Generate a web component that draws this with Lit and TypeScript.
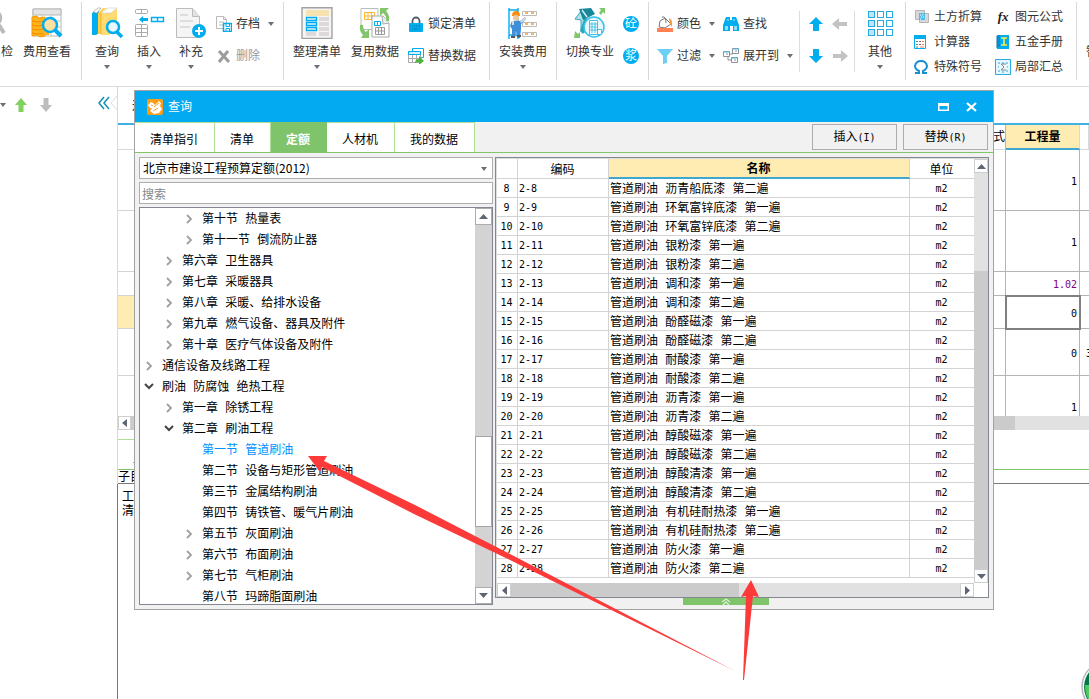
import { LitElement, html, svg, css } from "lit";
import { customElement, property, state } from "lit/decorators.js";
import { classMap } from "lit/directives/class-map.js";

const BLUE = "#00adef";

const icons: Record<string, any> = {
  check: svg`<circle cx="8" cy="11" r="8" fill="none" stroke="#bbb" stroke-width="2.5"/><path d="M14 18l5 8" stroke="#bbb" stroke-width="4"/>`,
  fee: svg`<path d="M2 2h28v27H2z" fill="#fff" stroke="#b8b8b8"/><path d="M2 2h28v6H2z" fill="#e4e4e4" stroke="#b8b8b8"/><path d="M2 14h28M2 20h28M11 8v21M20 8v21" stroke="#c4c4c4"/><path d="M1 10l5-1 2 2 6-1v19l-5 1-3-2-5 1z" fill="#ffb21c" stroke="#f59b00"/><path d="M1 14l5 1 8-1M1 18l5 1 8-1M1 22l5 1 8-1M1 26l5 1 8-1" fill="none" stroke="#f08f00"/><path d="M12 16h6v12h-6z" fill="#ffb21c"/><circle cx="19" cy="18" r="7" fill="#ffe0a0" stroke="${BLUE}" stroke-width="2.5"/><path d="M24 23l6 6" stroke="${BLUE}" stroke-width="4"/>`,
  query: svg`<path d="M1 6l7-5v25l-3 2H1z" fill="${BLUE}"/><path d="M2 5l5-4h3L6 6z" fill="#fff" stroke="#999" stroke-width=".6"/><path d="M7 6l5-5h3l-5 5v21H7z" fill="#ffcf4a"/><path d="M10 6l6-5 10 0v21l-8 6h-8z" fill="#ffdb72"/><path d="M10 6h10l6-5h-9z" fill="#fff" stroke="#ccc" stroke-width=".6"/><path d="M10 6v21" stroke="#efb32c"/><circle cx="22" cy="20" r="6" fill="#e7f7fd" stroke="${BLUE}" stroke-width="2.5"/><path d="M26 25l5 5" stroke="${BLUE}" stroke-width="3.5"/>`,
  insert: svg`<g fill="#fff" stroke="#aaa"><rect x="2.500" y="2.500" width="12" height="4" rx="1"/><rect x="2.500" y="17.500" width="12" height="12" rx="1"/><path d="M8.500 2.500v4M8.500 17.500v12M2.500 21.500h12M2.500 25.500h12"/></g><path d="M6 12.500l4-3.500v2h5v3h-5v2z" fill="${BLUE}"/><path d="M18.500 10.500h12v4h-12zM24.500 10v5" fill="#fff" stroke="${BLUE}" stroke-width="1.400"/>`,
  supplement: svg`<path d="M1.500 1.500h16l7 8v21h-23z" fill="#f5f5f5" stroke="#bbb"/><path d="M17.500 1.500v8h7" fill="#e2e2e2" stroke="#bbb"/><path d="M5 8h8M5 14h13M5 20h10" stroke="#ddd" stroke-width="2"/><circle cx="24" cy="24" r="7" fill="${BLUE}"/><path d="M24 20v8M20 24h8" stroke="#fff" stroke-width="2"/>`,
  archive: svg`<path d="M.5.5h7l3 3v9h-10z" fill="#fff" stroke="#bbb"/><path d="M7.500.5v3h3M3 6h5M3 9h4" fill="none" stroke="#bbb"/><path d="M7.500 7.500h8v8h-8z" fill="#fff" stroke="${BLUE}" stroke-width="1.500"/><path d="M10 8v2.500h3.500V8M10 15v-2.500h3.500V15" fill="none" stroke="${BLUE}"/>`,
  remove: svg`<path d="M3 3l10 11M12 3L3 14" stroke="#9c9c9c" stroke-width="3"/>`,
  arrange: svg`<path d="M1 .8h30v30.700H1z" fill="#f4f4f4" stroke="#a2a2a2" stroke-width="1.400"/><path d="M5 3h23v6H5z" fill="#f6e3b0"/><path d="M18 10h10v4H18zM18 15h10v4H18zM18 20h10v4H18zM5 25h10v4H5zM18 25h10v4H18z" fill="#dcd8dc"/><g fill="#d9f2fc" stroke="${BLUE}" stroke-width="1.400"><path d="M5.500 10.500h10v3h-10zM5.500 15.500h10v3h-10zM5.500 20.500h10v3h-10z"/></g>`,
  reuse: svg`<path d="M2 1.500h17v21H2z" fill="#fff" stroke="#bbb"/><path d="M5.500 5.500h10v7h-10zM9 5v8M12.500 5v8M5.500 9h10" fill="none" stroke="#ffb52e"/><path d="M13 9h11l6 7v14H13z" fill="#fff" stroke="#aaa"/><path d="M23 9l1 8 6-1" fill="#eee" stroke="#aaa"/><path d="M15.500 14.500h6v4h-6zM18.500 14v5" fill="#fff" stroke="${BLUE}"/><path d="M16.500 20.500h9v7h-9zM19.500 20v7M22.500 20v7M16.500 24h9" fill="none" stroke="#999"/><path d="M21 1h9l-3 3q4 4 3 10h-3q1-5-3-8l-3 3z" fill="#82c66b"/><path d="M1 18h3q0 5 3 7l3-3v9H2l2-3q-4-4-3-10z" fill="#82c66b"/>`,
  lock: svg`<path d="M4.500 8V5a3.500 3.500 0 0 1 7 0v3" fill="none" stroke="#555c6b" stroke-width="1.800"/><rect x="1" y="7" width="14" height="9" rx="1" fill="${BLUE}"/><path d="M4 10h1M6 10h1M8 10h1M10 10h2M4 13h1M6 13h4M11 13h1" stroke="#0878a8"/>`,
  replace: svg`<path d="M4.500.5h11v9h-11z" fill="#fff" stroke="${BLUE}"/><path d="M.5 3.500h12v11H.5z" fill="#fff" stroke="#aaa"/><path d="M.5 3.500h12v3H.5z" fill="#d5f2fc" stroke="${BLUE}"/><path d="M4.500 7v7M8.500 7v7M1 10.500h11" stroke="#aaa"/><path d="M7 15q0-4 4-4V8l5 5-5 4v-3q-3 0-4 1z" fill="#4cb53b"/>`,
  install: svg`<path d="M2 1v31M11 1v31M2 3h9M2 28h9" stroke="${BLUE}" stroke-width="1.400" fill="none"/><g fill="#fff" stroke="#bbb"><path d="M15.500 4.500h14v4h-14zM15.500 15.500h14v4h-14zM15.500 25.500h14v4h-14z"/></g><path d="M18 6h3M24 6h3M18 17h3M24 17h3M18 27h3M24 27h3" stroke="#f79a2c" stroke-width="1.400"/><path d="M5 9q0-5 4-5t4 5z" fill="#ff8d0a"/><circle cx="9" cy="11" r="3" fill="#f3c6a2"/><path d="M5 14h8l5-4 1 2-5 5v5l-1 9h-3l-1-7-1 7H5V22l-2-3z" fill="#3d8fda"/><path d="M5 14h2v4H5zM13 14l5-4 1 2-5 4z" fill="#d7dbe0"/><path d="M4 29h4v2H4zM10 28h4v2h-4z" fill="#555"/>`,
  switchPro: svg`<path d="M1 12L8 3l3 1 2 9-3 13-3-2 0-11z" fill="#b4e1e8" stroke="#0a94aa" stroke-width=".8"/><path d="M5 2L17 1l4 6-12 6z" fill="#17879a"/><path d="M8 3l5 7" stroke="#d5f2f6" stroke-width="1.400"/><path d="M10 12l-4 12 3 3 6-15z" fill="#29a7b7"/><circle cx="20" cy="20" r="10" fill="#e6f8fd" stroke="#33c2ec" stroke-width="1.500"/><path d="M15.500 13.500h8v14h-8zM23.500 22.500h4v5h-4z" fill="#fff" stroke="#49bfe2"/><path d="M18 15v11M21 15v11M16 17h7M16 20h7M16 23h7" stroke="#49bfe2"/><path d="M25 1h6v6l-2-2-2 3-2-2 2-3zM1 24l3 3 2-2v6H0z" fill="#82c66b"/>`,
  disc: svg`<circle cx="8" cy="8" r="8" fill="${BLUE}"/>`,
  color: svg`<path d="M3 5l5-3 6 6-6 4-6-1z" fill="#fff" stroke="#777"/><path d="M5 1q4-1 4 6" fill="none" stroke="#777"/><path d="M12 2q4 1 3 9l-2-3z" fill="#f79a3c"/><path d="M0 12h16v4H0z" fill="#ff8154"/>`,
  find: svg`<path d="M3 1h4v3h2V1h4l3 8v6h-6v-5H7v5H0V9z" fill="${BLUE}"/><path d="M2 10h3v4H2zM11 10h3v4h-3z" fill="#8edcf6"/><path d="M4 4h2M10 4h2" stroke="#bdeafa"/>`,
  filter: svg`<path d="M0 1h16l-6 7v7l-4 1V8z" fill="#6dcff6"/>`,
  expand: svg`<g fill="#fff" stroke="#8c9199"><path d="M.5 3.500h6v5h-6zM9.500.5h6v5h-6zM8.500 9.500h6v5h-6z"/></g><path d="M1 4h6M10 1h6M9 10h6" stroke="#49bfe2"/><path d="M7 6h3M5 9v3h3M12 3h2M11 12h2M3 6h2" fill="none" stroke="#8c9199"/>`,
  up: svg`<path d="M8 1l7 7h-4v7H5V8H1z" fill="${BLUE}"/>`,
  down: svg`<path d="M8 15l7-7h-4V1H5v7H1z" fill="${BLUE}"/>`,
  left: svg`<path d="M0 8l7-6v4h8v4H7v4z" fill="#c3c3c3"/>`,
  right: svg`<path d="M16 8L9 2v4H1v4h8v4z" fill="#c3c3c3"/>`,
  other: svg`<g stroke="#28a9e0">${[5, 14, 23].map((y) => [4, 13, 22].map((x) => svg`<rect x=${x + 0.5} y=${y - 0.5} width="6" height="6" fill=${x === 4 ? "#bfe3fa" : "#fff"}/>`))}</g>`,
  earth: svg`<path d="M1.500 1.500h9v9h-9zM5.500 4.500h9v9h-9z" fill="#d9d9d9" stroke="#b5b5b5"/><path d="M5 4h6v7H5z" fill="#50bfe8"/><path d="M6 6h1M8 6h1M7 8h1M9 8h1M6 10h1" stroke="#fff"/>`,
  calc: svg`<path d="M.5 1.500h11v13h-11z" fill="#fff" stroke="${BLUE}"/><path d="M0 1h12v4H0z" fill="${BLUE}"/><path d="M2 7.500h2M5 7.500h2M2 10.500h2M5 10.500h2M2 13h2" stroke="#777"/><path d="M8 7.500h2M8 10.500h2M6 13h4" stroke="#f27c49"/>`,
  omega: svg`<path d="M1 14h4v-2Q1 10 1 7q1-5 6-5t6 5q0 3-4 5v2h4" fill="none" stroke="#168fd2" stroke-width="2"/>`,
  book: svg`<path d="M2 1h12v14H2z" fill="${BLUE}"/><path d="M2 2v12M4 1v12" stroke="#0a6fa8"/><path d="M6 4h6M9 4v7M6 11h6" stroke="#ffe94a" stroke-width="1.600"/>`,
  sum: svg`<path d="M.5.5h15v15H.5z" fill="#e5f6fd" stroke="#28a9e0"/><path d="M3 4h2M7 4h2M11 4h2M3 12h2M7 13h2M11 12h2M3 8h1M12 8h1" stroke="#28a9e0"/><path d="M11 5H6l3 3-3 3h5" fill="none" stroke="#888"/>`,
};

const glyph = (name: string, size: number) =>
  html`<svg width=${size} height=${size} viewBox="0 0 ${size} ${size}" aria-hidden="true">${icons[name]}</svg>`;

const font = css`"Liberation Sans", "Noto Sans CJK SC", sans-serif`;
const gridFont = css`"Liberation Mono", "Noto Sans CJK SC", monospace`;

const reset = css`
  * { box-sizing: border-box; }
  button {
    font: inherit; color: inherit; background: none; border: 0; padding: 0; margin: 0;
    text-align: center; white-space: nowrap; cursor: pointer;
  }
  svg { display: block; flex: none; }
  .caret { width: 0; height: 0; border: 3px solid transparent; border-top: 4px solid #6b6f79; border-bottom: 0; flex: none; }
`;

@customElement("app-ribbon")
class AppRibbon extends LitElement {
  static styles = [reset, css`
    :host { display: flex; height: 87px; background: #fff; border-bottom: 1px solid #ddd; overflow: hidden; color: #333; font: 12px/18px ${font}; }
    .group { display: flex; flex: none; height: 78px; margin-top: 2px; padding-right: 9px; border-right: 1px solid #d9d9d9; }
    .first { margin-left: -20px; }
    .pad4 { padding-left: 4px; }
    .pad8 { padding-left: 8px; }
    .flush { padding-right: 0; }
    .wide-end { padding-right: 13px; }
    .big { display: flex; flex-direction: column; align-items: center; padding-top: 5px; }
    .big span { margin: 4px 0; }
    .w42 { width: 42px; } .w50 { width: 50px; } .w58 { width: 58px; } .w66 { width: 66px; }
    .col { display: flex; flex-direction: column; gap: 14px; padding-top: 13px; }
    .col.tight { gap: 7px; padding-top: 6px; }
    .small { display: flex; align-items: center; gap: 4px; height: 18px; }
    .small .caret { margin-left: 4px; }
    .disabled { color: #999; }
    .inset { margin-left: 4px; }
    .next { margin-left: 8px; }
    .last-col { margin-left: 13px; margin-right: 4px; }
    .short { align-self: center; height: 61px; width: 1px; background: #ddd; margin-left: 6px; }
    .round { position: relative; width: 16px; color: #fff; }
    .round b { position: absolute; inset: 0; font: 12px/18px ${font}; }
    .fx { width: 16px; font: italic bold 13px/16px "Liberation Serif", serif; color: #222; }
  `];

  big(icon: string, label: string, width: string, caret = false) {
    return html`<button class="big ${width}">${glyph(icon, 32)}<span>${label}</span>${caret ? html`<i class="caret"></i>` : ""}</button>`;
  }
  small(icon: string, label: string, caret = false, extra = "") {
    return html`<button class="small ${extra}">${icon === "fx" ? html`<i class="fx">fx</i>` : glyph(icon, 16)}${label}${caret ? html`<i class="caret"></i>` : ""}</button>`;
  }
  arrow(icon: string, label: string) {
    return html`<button class="small" aria-label=${label}>${glyph(icon, 16)}</button>`;
  }
  round(label: string) {
    return html`<button class="small round">${glyph("disc", 16)}<b>${label}</b></button>`;
  }

  render() {
    return html`
      <div class="group first">${this.big("check", "自检", "w42")}${this.big("fee", "费用查看", "w50")}</div>
      <div class="group pad4">
        ${this.big("query", "查询", "w42", true)}${this.big("insert", "插入", "w42", true)}${this.big("supplement", "补充", "w42", true)}
        <div class="col inset">${this.small("archive", "存档", true)}${this.small("remove", "删除", false, "disabled")}</div>
      </div>
      <div class="group pad4 wide-end">
        ${this.big("arrange", "整理清单", "w58", true)}${this.big("reuse", "复用数据", "w58")}
        <div class="col inset">${this.small("lock", "锁定清单")}${this.small("replace", "替换数据")}</div>
      </div>
      <div class="group flush">${this.big("install", "安装费用", "w66", true)}</div>
      <div class="group">
        ${this.big("switchPro", "切换专业", "w66")}
        <div class="col">${this.round("砼")}${this.round("浆")}</div>
      </div>
      <div class="group pad8 flush">
        <div class="col">${this.small("color", "颜色", true)}${this.small("filter", "过滤", true)}</div>
        <div class="col next">${this.small("find", "查找")}${this.small("expand", "展开到", true)}</div>
        <div class="short"></div>
        <div class="col next">${this.arrow("up", "上移")}${this.arrow("down", "下移")}</div>
        <div class="col next">${this.arrow("left", "升级")}${this.arrow("right", "降级")}</div>
        <div class="short"></div>
        ${this.big("other", "其他", "w50", true)}
      </div>
      <div class="group pad8">
        <div class="col tight">${this.small("earth", "土方折算")}${this.small("calc", "计算器")}${this.small("omega", "特殊符号")}</div>
        <div class="col tight last-col">${this.small("fx", "图元公式")}${this.small("book", "五金手册")}${this.small("sum", "局部汇总")}</div>
      </div>
      <div class="group pad8">${this.big("", "智能组价", "w50")}</div>
    `;
  }
}

type Node = { level: number; label: string; mark: "" | "closed" | "open" };
const n = (level: number, label: string, mark: Node["mark"] = "closed"): Node => ({ level, label, mark });
const TREE: Node[] = [
  n(2, "第十节 热量表"), n(2, "第十一节 倒流防止器"),
  n(1, "第六章 卫生器具"), n(1, "第七章 采暖器具"), n(1, "第八章 采暖、给排水设备"),
  n(1, "第九章 燃气设备、器具及附件"), n(1, "第十章 医疗气体设备及附件"),
  n(0, "通信设备及线路工程"), n(0, "刷油 防腐蚀 绝热工程", "open"),
  n(1, "第一章 除锈工程"), n(1, "第二章 刷油工程", "open"),
  n(2, "第一节 管道刷油", ""), n(2, "第二节 设备与矩形管道刷油", ""), n(2, "第三节 金属结构刷油", ""),
  n(2, "第四节 铸铁管、暖气片刷油", ""), n(2, "第五节 灰面刷油"), n(2, "第六节 布面刷油"),
  n(2, "第七节 气柜刷油"), n(2, "第八节 玛蹄脂面刷油", ""),
];

const PAINTS = ["环氧富锌底漆", "银粉漆", "调和漆", "酚醛磁漆", "耐酸漆", "沥青漆", "醇酸磁漆", "醇酸清漆", "有机硅耐热漆", "防火漆"];
const NAMES = ["沥青船底漆 第二遍", ...PAINTS.flatMap((p) => [`${p} 第一遍`, `${p} 第二遍`])];
const ROWS = NAMES.map((name, i) => ({ index: i + 8, code: `2-${i + 8}`, name: `管道刷油 ${name}` }));

@customElement("query-dialog")
class QueryDialog extends LitElement {
  @property() heading = "查询";
  @state() tab = "定额";
  @state() node = "第一节 管道刷油";

  static styles = [reset, css`
    :host { display: block; background: #f1f1f1; border: 1px solid #a3a3a3; color: #000; font: 12px/18px ${font}; }
    .title { display: flex; align-items: center; height: 31px; padding: 0 13px 0 12px; background: #03a9f1; color: #fff; }
    .title span { margin-left: 5px; flex: 1; }
    .title button { width: 16px; height: 16px; margin-left: 13px; }
    .tabs { display: flex; align-items: center; height: 31px; padding-right: 5px; border-bottom: 1px solid #82c66b; }
    .tab { height: 30px; padding: 0 16px 0 15px; background: #fff; border-right: 1px solid #b0e096; border-top: 1px solid #b0e096; line-height: 34px; }
    .tab.on { background: #7fc46a; color: #fff; font-weight: bold; border-color: #7fc46a; }
    .grow { flex: 1; }
    .action { width: 85px; height: 26px; margin-left: 6px; border: 1px solid #adadad; }
    .action span { font: 10px "DejaVu Sans Mono", monospace; }
    .body { display: grid; grid-template-columns: 354px minmax(0, 1fr); gap: 2px; padding: 4px; }
    .side { display: flex; flex-direction: column; gap: 3px; }
    .combo { position: relative; display: block; }
    .combo .caret { position: absolute; right: 6px; top: 10px; }
    select, input { display: block; width: 100%; height: 22px; margin: 0; padding: 0 3px; border: 1px solid #adadad; background: #fff; border-radius: 0; color: #000; font: 12px/20px "Noto Sans CJK SC", sans-serif; appearance: none; outline: 0; }
    input { padding: 0 2px; }
    input::placeholder { color: #888; opacity: 1; }
    .tree { display: flex; flex: 1; contain: size; overflow: hidden; background: #fff; border: 1px solid #828790; font-family: ${gridFont}; }
    .nodes { flex: 1; min-width: 0; overflow: hidden; }
    .node { display: flex; align-items: center; width: 100%; height: 21px; line-height: 17px; }
    .label { padding-top: 4px; }
    .l0 { padding-left: 1px; } .l1 { padding-left: 21px; } .l2 { padding-left: 41px; }
    .mark { display: flex; justify-content: center; width: 16px; margin-right: 5px; }
    .sel { color: #0090ff; }
    .vbar, .hbar { display: flex; background: #e1e1e1; }
    .vbar { flex-direction: column; }
    .tree .vbar { width: 17px; background: #d3d3d3; }
    .arrow { display: flex; align-items: center; justify-content: center; flex: none; width: 14px; height: 14px; background: #fff; border: 1px solid #cfcfcf; }
    .tree .arrow { width: 17px; height: 17px; border-color: #adadad; }
    .s212 { flex: 212; } .s90 { flex: 90; } .s60 { flex: 60; } .s98 { flex: 98; } .s299 { flex: 299; } .s228 { flex: 228; } .s222 { flex: 222; }
    .thumb { background: #cbcbcb; }
    .tree .thumb { background: #fff; border: 1px solid #a5a5a5; }
    .panel { display: grid; grid-template-columns: minmax(0, 1fr) 14px; background: #fff; border: 1px solid #828790; box-shadow: inset 1px 1px #dcdcdc; padding: 1px 0 0 1px; }
    .sheet { padding-bottom: 5px; }
    table { width: 100%; table-layout: fixed; border-collapse: separate; border-spacing: 0; font-family: ${gridFont}; }
    th, td { height: 19px; padding: 4px 2px 0 1px; border: solid #d3d3d3; border-width: 0 1px 1px 0; line-height: 14px; font-weight: normal; text-align: left; white-space: nowrap; overflow: hidden; }
    th { height: 20px; text-align: center; }
    th.on { background: #ffecb3; border-bottom: 2px solid #3ea6cf; font-weight: bold; }
    th:last-child, td:last-child { border-right: 0; }
    td.num { padding-top: 2px; font: 10px/16px "DejaVu Sans Mono", monospace; }
    td.mid { text-align: center; }
    .c1 { width: 21px; } .c2 { width: 91px; } .c4 { width: 64px; }
    .grip { display: flex; justify-content: center; width: 86px; height: 7px; margin-left: 38%; background: #7fc46a; }
  `];

  tri(d: string) {
    return html`<svg width="9" height="9" viewBox="0 0 9 9" aria-hidden="true"><path d=${d} fill="#5f6673"/></svg>`;
  }
  arrow(dir: "up" | "down" | "left" | "right") {
    const d = { up: "M0 7l4.500-5L9 7z", down: "M0 2l4.500 5L9 2z", left: "M7 0L2 4.500 7 9z", right: "M2 0l5 4.500L2 9z" }[dir];
    return html`<button class="arrow" aria-label=${dir}>${this.tri(d)}</button>`;
  }
  mark(kind: Node["mark"]) {
    if (kind === "closed") return html`<svg width="8" height="10" viewBox="0 0 8 10"><path d="M2 1l4 4-4 4" fill="none" stroke="#a0a0a0" stroke-width="1.800"/></svg>`;
    if (kind === "open") return html`<svg width="10" height="8" viewBox="0 0 10 8"><path d="M1 1l4 4 4-4" fill="none" stroke="#444" stroke-width="2"/></svg>`;
    return "";
  }

  render() {
    return html`
      <div class="title">
        <svg width="16" height="16" viewBox="0 0 16 16"><rect width="16" height="16" rx="2" fill="#fb9c1b"/><path d="M1 6l3-3 2 1 2 2 4-4 2 2-1 3 2 3-3 4-5 1-4-3 2-3-2 0z" fill="#fff"/><path d="M4 6l2 1M7 8l5-4M6 12l5-3" stroke="#fb9c1b"/></svg>
        <span>${this.heading}</span>
        <button aria-label="最大化"><svg width="16" height="16" viewBox="0 0 16 16"><path d="M3 4h11v8H3zM4.500 7v3.500h8V7z" fill="#fff" fill-rule="evenodd"/></svg></button>
        <button aria-label="关闭"><svg width="16" height="16" viewBox="0 0 16 16"><path d="M3 4l9 8M12 4l-9 8" stroke="#fff" stroke-width="2.200"/></svg></button>
      </div>
      <div class="tabs">
        ${["清单指引", "清单", "定额", "人材机", "我的数据"].map((t) => html`<button class=${classMap({ tab: true, on: t === this.tab })} @click=${() => (this.tab = t)}>${t}</button>`)}
        <div class="grow"></div>
        <button class="action">插入<span>(I)</span></button>
        <button class="action">替换<span>(R)</span></button>
      </div>
      <div class="body">
        <div class="side">
          <label class="combo"><select aria-label="定额库"><option>北京市建设工程预算定额(2012)</option></select><i class="caret"></i></label>
          <input type="text" placeholder="搜索" aria-label="搜索">
          <div class="tree">
            <div class="nodes">
              ${TREE.map((t) => html`<button class="node l${t.level} ${t.label === this.node ? "sel" : ""}" @click=${() => (this.node = t.label)}><span class="mark">${this.mark(t.mark)}</span><span class="label">${t.label}</span></button>`)}
            </div>
            <div class="vbar">${this.arrow("up")}<div class="s212"></div><div class="thumb s90"></div><div class="s60"></div>${this.arrow("down")}</div>
          </div>
        </div>
        <div>
          <div class="panel">
            <div class="sheet">
              <table>
                <thead><tr><th class="c1"></th><th class="c2">编码</th><th class="on">名称</th><th class="c4">单位</th></tr></thead>
                <tbody>${ROWS.map((r) => html`<tr><td class="num mid">${r.index}</td><td class="num">${r.code}</td><td>${r.name}</td><td class="num mid">m2</td></tr>`)}</tbody>
              </table>
            </div>
            <div class="vbar">${this.arrow("up")}<div class="s98"></div><div class="thumb s299"></div>${this.arrow("down")}</div>
            <div class="hbar">${this.arrow("left")}<div class="thumb s228"></div><div class="s222"></div>${this.arrow("right")}</div>
          </div>
          <div class="grip"><svg width="10" height="7" viewBox="0 0 10 7"><path d="M1 4l4-3 4 3M2 7l3-3 3 3" fill="none" stroke="#d9f0d0" stroke-width="1.400"/></svg></div>
        </div>
      </div>
    `;
  }
}

const QUANTITIES = [
  { h: "h61", value: "1" },
  { h: "h61", value: "1" },
  { h: "h24", value: "1.02", tone: "purple" },
  { h: "h33", value: "0", tone: "focus" },
  { h: "h47", value: "0", next: "3" },
  { h: "h61", value: "1" },
];

@customElement("app-root")
class AppRoot extends LitElement {
  static styles = [reset, css`
    :host { display: flex; flex-direction: column; position: relative; min-height: 100vh; overflow: hidden; background: #fff; color: #000; font: 12px/18px ${font}; }
    .work { display: flex; flex: 1; }
    .aside { width: 117px; flex: none; }
    .tools { display: flex; align-items: center; height: 36px; }
    .tools button { margin-left: 9px; }
    .tools .fold { margin-left: auto; margin-bottom: 5px; }
    .notch { margin-bottom: 4px; }
    .main { display: flex; flex: 1; flex-direction: column; min-width: 0; border-left: 1px solid #d8d8d8; }
    .strip { height: 38px; padding: 10px 14px 0; border-bottom: 2px solid #41b1e1; }
    .sheet { height: 291px; overflow: hidden; }
    table { width: 100%; table-layout: fixed; border-collapse: separate; border-spacing: 0; }
    th, td { padding: 3px 2px 0; border: solid #b4b4b4; border-width: 0 1px 1px 0; text-align: right; font: 10px/16px "DejaVu Sans Mono", monospace; }
    th { height: 25px; padding-top: 0; border-color: #d8d8d8; font: 12px/20px ${font}; }
    th.expr { padding: 0; border-right-color: #b4b4b4; }
    th.on { padding: 0; text-align: center; background: #ffecb3; border-bottom: 2px solid #3ea6cf; font-weight: bold; }
    td:first-child { border-color: #d3d3d3; }
    .h61 { height: 61px; } .h24 { height: 24px; } .h33 { height: 33px; } .h47 { height: 47px; }
    .mark td:first-child { background: #ffecb3; }
    .purple .qty { color: #800080; }
    .focus .qty { outline: 2px solid #808080; outline-offset: -1px; }
    .expr { width: 90px; } .qty { width: 74px; } .more { width: 9px; }
    td.more { padding: 3px 0 0 6px; text-align: left; border-right: 0; overflow: hidden; }
    .bar { display: flex; height: 14px; background: #e1e1e1; }
    .bar button { display: flex; align-items: center; justify-content: center; width: 13px; background: #fff; border: 1px solid #cfcfcf; }
    .bar i { flex: none; width: 91%; background: #cbcbcb; }
    .low { display: flex; height: 40px; padding-top: 9px; border-bottom: 1px solid #82c66b; }
    .low button { padding: 8px 15px 0; border-top: 1px solid #b0e096; }
    .sub { height: 14px; line-height: 14px; border-bottom: 1px solid #777; }
    .note { flex: 1; padding: 6px 4px; line-height: 14px; border-left: 1px solid #777; margin-left: -1px; }
    .dialog { position: absolute; left: 134px; right: 95px; top: 90px; }
    .badge { position: absolute; right: 0; bottom: 0; }
    .marks { position: absolute; inset: 0; width: 100%; height: 100%; pointer-events: none; }
  `];

  render() {
    return html`
      <app-ribbon></app-ribbon>
      <div class="work">
        <div class="aside">
          <div class="tools">
            <i class="caret"></i>
            <button aria-label="上移"><svg width="12" height="14" viewBox="0 0 12 14"><path d="M6 0l6 7H8.500v7h-5V7H0z" fill="#82d05f"/></svg></button>
            <button aria-label="下移"><svg width="18" height="14" viewBox="-4 0 18 14"><path d="M6 14l6-7H8.500V0h-5v7H0z" fill="#bdbdbd"/></svg></button>
            <button class="fold" aria-label="收起"><svg width="14" height="14" viewBox="0 0 14 14"><path d="M8 1L3 7l5 6M13 1L8 7l5 6" fill="none" stroke="#1590b5" stroke-width="1.500"/></svg></button>
            <svg class="notch" width="7" height="24" viewBox="0 0 7 24"><path d="M7 5L1 12l6 7" fill="none" stroke="#ddd"/></svg>
          </div>
        </div>
        <div class="main">
          <div class="strip">造价分析</div>
          <div class="sheet">
            <table>
              <thead><tr><th></th><th class="expr">工程量表达式</th><th class="qty on">工程量</th><th class="more"></th></tr></thead>
              <tbody>${QUANTITIES.map((q) => html`<tr class="${q.tone ?? ""} ${q.tone === "focus" ? "mark" : ""}"><td class=${q.h}></td><td></td><td class="qty">${q.value}</td><td class="more">${q.next ?? ""}</td></tr>`)}</tbody>
            </table>
          </div>
          <div class="bar"><button aria-label="向左"><svg width="5" height="8" viewBox="0 0 5 8"><path d="M5 0L0 4l5 4z" fill="#5f6673"/></svg></button><i></i></div>
          <div class="low"><button>工料机显示</button></div>
          <div class="sub">子目工作内容</div>
          <div class="note"><div>工作内容</div><div>清理</div></div>
        </div>
      </div>
      <query-dialog class="dialog"></query-dialog>
      <svg class="badge" width="9" height="34" viewBox="0 0 9 34"><circle cx="28" cy="22" r="26" fill="#fff" stroke="#b5b5b5" stroke-width="1.500"/><circle cx="28" cy="22" r="24" fill="#00784a"/><path d="M5 20h4v14H8Q5 28 5 20z" fill="#4fcb5d"/></svg>
      <svg class="marks" aria-hidden="true">
        <path d="M308 456h19l-3 5 91 44 95 49 225 117-225-111-96-46-92-47-2 5z" fill="#fd3a3a"/>
        <path d="M751 580l8 17-6-1-9 84h-1l3-84-5 1z" fill="#fd3a3a"/>
      </svg>
    `;
  }
}
